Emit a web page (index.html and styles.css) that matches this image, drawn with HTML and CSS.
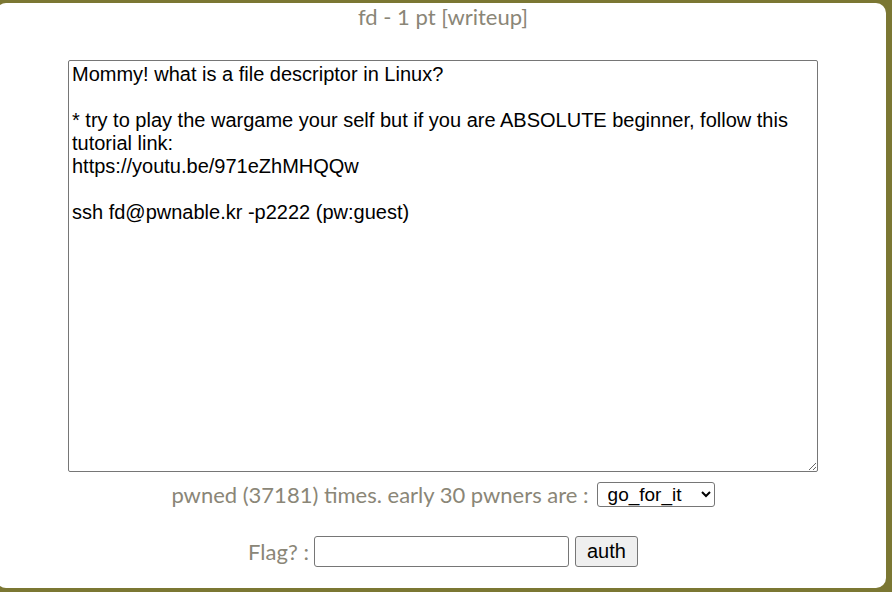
FILE: index.html
```html
<!DOCTYPE html>
<html>
<head>
    <title>fd - 1 pt</title>
    <link rel="stylesheet" href="styles.css">
</head>
<body>
    <!-- Challenge panel -->
    <div class="panel">
        <div class="title">fd - 1 pt [writeup]</div>

        <!-- Challenge description -->
        <textarea class="desc" readonly>Mommy! what is a file descriptor in Linux?

* try to play the wargame your self but if you are ABSOLUTE beginner, follow this tutorial link:
https://youtu.be/971eZhMHQQw

ssh fd@pwnable.kr -p2222 (pw:guest)</textarea>

        <!-- Early pwners -->
        <div class="row pwned-row">
            <span>pwned (37181) times. early 30 pwners are :</span>
            <select class="pwners">
                <option>go_for_it</option>
            </select>
        </div>

        <!-- Flag submit -->
        <form class="row flag-row">
            <span>Flag? :</span>
            <input type="text" class="flag-input">
            <button type="submit" class="auth-btn">auth</button>
        </form>
    </div>
</body>
</html>
```

FILE: styles.css
```css
/* Page background */
body {
    margin: 0;
    background-color: #7b7733; /* olive frame */
    font-family: Lato, "Open Sans", sans-serif;
    overflow: hidden;
}

/* White rounded panel */
.panel {
    background-color: #fff;
    border-radius: 10px;
    margin: 3px 6px 0 -4px;
    padding-left: 4px;
    height: 585px;
    display: flex;
    flex-direction: column;
    align-items: center;
}

.title {
    color: #8a8677;
    font-size: 22px;
    line-height: 26px;
    margin-top: 1px;
}

/* Description box */
.desc {
    box-sizing: border-box;
    width: 750px;
    height: 412px;
    margin: 30px 0 0;
    padding: 2px 3px;
    border: 1px solid #767676;
    border-radius: 2px;
    font-family: "Liberation Sans", Arial, sans-serif;
    font-size: 20px;
    line-height: 23px;
    color: #000;
    resize: both;
}

.row {
    display: flex;
    align-items: center;
    color: #8a8677;
    font-size: 22px;
}

.pwned-row {
    margin-top: 9px;
    gap: 8px;
}

.pwners {
    box-sizing: border-box;
    width: 118px;
    height: 25px;
    font-family: "Liberation Sans", Arial, sans-serif;
    font-size: 19px;
    color: #000;
    border: 1px solid #767676;
    border-radius: 3px;
    background: #fff;
    padding: 0 4px 0 6px;
}

.flag-row {
    margin: 28px 0 0;
    gap: 5px;
}

.flag-input {
    box-sizing: border-box;
    width: 255px;
    height: 31px;
    border: 1px solid #767676;
    border-radius: 3px;
    font-size: 20px;
}

.auth-btn {
    box-sizing: border-box;
    width: 63px;
    height: 31px;
    padding: 0;
    margin-left: 1px;
    font-family: "Liberation Sans", Arial, sans-serif;
    font-size: 20px;
    color: #000;
    background-color: #efefef;
    border: 1px solid #767676;
    border-radius: 3px;
}
```
